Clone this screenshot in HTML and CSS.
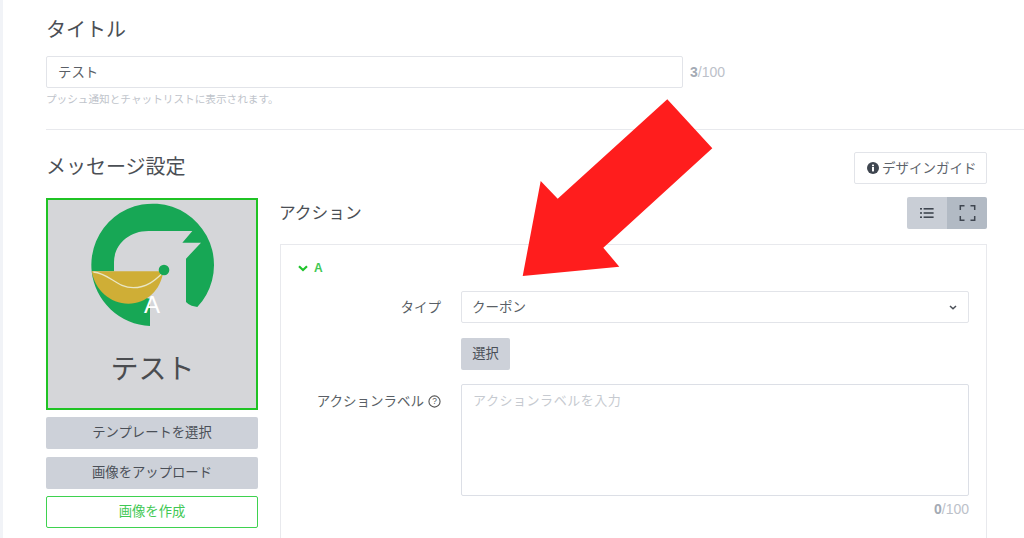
FILE: index.html
```html
<!DOCTYPE html>
<html lang="ja">
<head>
<meta charset="utf-8">
<title>メッセージ設定</title>
<link rel="stylesheet" href="styles.css">
</head>
<body>
<main class="page">
  <section class="title-section">
    <h2 class="heading">タイトル</h2>
    <div class="title-row">
      <input class="text-input" type="text" value="テスト">
      <span class="counter"><b>3</b>/100</span>
    </div>
    <p class="hint">プッシュ通知とチャットリストに表示されます。</p>
  </section>
  <hr class="divider">
  <section class="message-section">
    <div class="message-head">
      <h2 class="heading">メッセージ設定</h2>
      <button class="guide-btn" type="button">
        <svg class="info-icon" viewBox="0 0 12 12"><circle cx="6" cy="6" r="6" fill="#3f4650"/><rect x="5" y="5" width="2" height="4.4" fill="#fff"/><rect x="5" y="2.6" width="2" height="1.6" fill="#fff"/></svg>
        デザインガイド
      </button>
    </div>
    <div class="columns">
      <div class="left-col">
        <div class="preview">
          <svg class="logo" viewBox="150 35 375 375">
            <path fill="#17a755" d="M155 243A184 184 0 1 1 472 350L455 346Q444 342 438 335V205L483 157H427L457 122H325C265 122 222 165 222 215V243Z"/>
            <path fill="#17a755" d="M155 243A184 184 0 0 0 330 407V325L200 300Z"/>
            <path fill="#cfae36" d="M155 243H370C362 300 320 340 265 340C210 340 165 300 155 243Z"/>
            <path fill="none" stroke="#e9e6c4" stroke-width="4" d="M160 245C210 250 230 292 280 292C320 292 345 270 368 248"/>
            <circle cx="372" cy="239" r="16" fill="#17a755"/>
          </svg>
          <span class="preview-badge">A</span>
          <span class="preview-text">テスト</span>
        </div>
        <button class="btn btn-block" type="button">テンプレートを選択</button>
        <button class="btn btn-block" type="button">画像をアップロード</button>
        <button class="btn btn-block btn-green" type="button">画像を作成</button>
      </div>
      <div class="right-col">
        <div class="action-head">
          <h3 class="subheading">アクション</h3>
          <div class="toggle">
            <span class="toggle-item">
              <svg class="toggle-icon" viewBox="0 0 14 12"><g fill="#3f4650"><rect x="0" y="1" width="2" height="1.6"/><rect x="0" y="5.2" width="2" height="1.6"/><rect x="0" y="9.4" width="2" height="1.6"/><rect x="3.6" y="1" width="10" height="1.6"/><rect x="3.6" y="5.2" width="10" height="1.6"/><rect x="3.6" y="9.4" width="10" height="1.6"/></g></svg>
            </span>
            <span class="toggle-item toggle-active">
              <svg class="toggle-icon toggle-icon-wide" viewBox="0 0 16 16"><path fill="none" stroke="#3f4650" stroke-width="1.5" d="M.8 5V.8H5M11 .8H15.200V5M15.200 11V15.200H11M5 15.200H.8V11"/></svg>
            </span>
          </div>
        </div>
        <div class="panel">
          <div class="panel-title">
            <svg class="chevron" viewBox="0 0 10 7"><path fill="none" stroke="#1fc32c" stroke-width="2.200" d="M1 1.200L5 5L9 1.200"/></svg>
            <span>A</span>
          </div>
          <div class="form-grid">
            <label class="form-label">タイプ</label>
            <div class="select">
              <span>クーポン</span>
              <svg class="select-caret" viewBox="0 0 8 5"><path fill="none" stroke="#4a4f57" stroke-width="1.500" d="M1 1L4 3.800L7 1"/></svg>
            </div>
            <span></span>
            <div><button class="btn btn-small" type="button">選択</button></div>
            <label class="form-label form-label-top">アクションラベル
              <svg class="help-icon" viewBox="0 0 14 14"><circle cx="7" cy="7" r="6" fill="none" stroke="#555" stroke-width="1.200"/><text x="7" y="10.200" text-anchor="middle" class="help-mark">?</text></svg>
            </label>
            <div class="textarea-wrap">
              <textarea class="textarea" placeholder="アクションラベルを入力"></textarea>
              <div class="counter counter-right"><b>0</b>/100</div>
            </div>
          </div>
        </div>
      </div>
    </div>
  </section>
</main>
<svg class="arrow" viewBox="0 0 1024 538" aria-hidden="true">
  <polygon fill="#ff1d1d" points="667.300,99.300 712.300,148.300 603.300,247.700 619.300,266.700 522.700,276 540.700,181 557.700,198.700"/>
</svg>
</body>
</html>
```
FILE: styles.css
```css
* {
  box-sizing: border-box;
}

html,
body {
  margin: 0;
  height: 538px;
  overflow: hidden;
  background: #fff;
}

body {
  font-family: "Noto Sans CJK JP", "Liberation Sans", sans-serif;
  color: #4a4f57;
  position: relative;
}

.page {
  height: 538px;
  border-left: 3px solid #f1f3f7;
  padding-top: 15px;
  overflow: hidden;
}

.heading {
  margin: 0;
  font-size: 20px;
  line-height: 28px;
  font-weight: 400;
  color: #4b4f55;
}

.title-section,
.message-section {
  padding-left: 43px;
  padding-right: 37px;
}

.title-row {
  display: flex;
  align-items: center;
  gap: 7px;
  margin-top: 13px;
}

.text-input {
  width: 637px;
  height: 32px;
  border: 1px solid #e2e4e9;
  border-radius: 2px;
  padding: 0 11px 3px;
  font: inherit;
  font-size: 13.4px;
  color: #5a5f66;
  background: #fff;
}

.counter {
  font-family: "Liberation Sans", sans-serif;
  font-size: 14px;
  line-height: 14px;
  color: #bcc1c9;
}

.counter b {
  color: #a3aab4;
}

.counter-right {
  margin-top: 6px;
  text-align: right;
}

.hint {
  margin: 4px 0 0;
  font-size: 10.63px;
  line-height: 14px;
  color: #c0c4cb;
}

.divider {
  margin: 23px 0 0 43px;
  border: 0;
  border-top: 1px solid #e8e9ed;
  height: 1px;
}

.message-section {
  padding-top: 22px;
}

.message-head {
  display: flex;
  justify-content: space-between;
  align-items: flex-start;
}

.guide-btn {
  display: flex;
  align-items: center;
  gap: 3px;
  width: 133px;
  height: 32px;
  padding: 0 0 3px 12px;
  border: 1px solid #e2e4e9;
  border-radius: 2px;
  background: #fff;
  font: inherit;
  font-size: 13.5px;
  color: #5d636b;
}

.info-icon {
  width: 12px;
  height: 12px;
  flex: none;
  margin-top: 3px;
}

.columns {
  display: flex;
  gap: 22px;
  margin-top: 14px;
}

.left-col {
  width: 212px;
  flex: none;
  display: flex;
  flex-direction: column;
}

.preview {
  position: relative;
  width: 212px;
  height: 212px;
  border: 2px solid #1fc324;
  background: #d5d6d9;
  display: flex;
  flex-direction: column;
  align-items: center;
  padding-top: 2px;
}

.logo {
  width: 125px;
  height: 125px;
  flex: none;
}

.preview-badge {
  position: absolute;
  left: 96px;
  top: 91px;
  width: 16px;
  text-align: center;
  font-family: "Liberation Sans", sans-serif;
  font-size: 24px;
  line-height: 28px;
  color: #fff;
}

.preview-text {
  margin-top: 20px;
  margin-left: 1px;
  font-size: 28px;
  line-height: 40px;
  color: #4a4c50;
}

.btn {
  border: 0;
  border-radius: 2px;
  background: #cdd1d9;
  font: inherit;
  font-size: 13.34px;
  color: #4a4f57;
  padding: 0 0 3px;
}

.btn-block {
  width: 212px;
  height: 32px;
  margin-top: 8px;
  flex: none;
}

.preview + .btn-block {
  margin-top: 7px;
}

.btn-green {
  margin-top: 7px;
  background: #fff;
  border: 1px solid #3ed24f;
  color: #3fc854;
}

.right-col {
  flex: 1;
  min-width: 0;
  margin-top: -1px;
}

.action-head {
  display: flex;
  justify-content: space-between;
  align-items: flex-start;
}

.subheading {
  margin: 1px 0 0 -1px;
  font-size: 16.7px;
  line-height: 28px;
  font-weight: 400;
  color: #4b4f55;
}

.toggle {
  display: flex;
  height: 32px;
  border-radius: 2px;
  overflow: hidden;
}

.toggle-item {
  width: 40px;
  background: #c9ced6;
  display: flex;
  align-items: center;
  justify-content: center;
}

.toggle-active {
  background: #b2bac4;
}

.toggle-icon {
  width: 14px;
  height: 12px;
}

.toggle-icon-wide {
  width: 17px;
  height: 16px;
}

.panel {
  margin-top: 15px;
  height: 320px;
  border: 1px solid #e8e9ed;
  padding: 16px 17px 0;
}

.panel-title {
  display: flex;
  align-items: center;
  gap: 6px;
  height: 14px;
  font-family: "Liberation Sans", sans-serif;
  font-size: 12px;
  font-weight: 700;
  color: #3fc854;
}

.chevron {
  width: 10px;
  height: 7px;
}

.form-grid {
  display: grid;
  grid-template-columns: 143px 508px;
  column-gap: 20px;
  row-gap: 15px;
  margin-top: 16px;
}

.form-label {
  display: flex;
  align-items: center;
  justify-content: flex-end;
  gap: 4px;
  font-size: 13.5px;
  color: #5a5f66;
  padding-bottom: 2px;
}

.form-label-top {
  align-self: start;
  height: 32px;
}

.help-icon {
  width: 13px;
  height: 13px;
  flex: none;
  margin-top: 2px;
}

.help-mark {
  font-family: "Liberation Sans", sans-serif;
  font-size: 9px;
  fill: #555;
}

.select {
  height: 32px;
  border: 1px solid #e2e4e9;
  border-radius: 2px;
  padding: 0 11px 2px 10px;
  display: flex;
  align-items: center;
  justify-content: space-between;
  font-size: 13.5px;
  color: #5a5f66;
}

.select-caret {
  width: 8px;
  height: 5px;
  margin-top: 2px;
}

.btn-small {
  display: block;
  width: 49px;
  height: 32px;
}

.textarea-wrap {
  margin-top: -1px;
}

.textarea {
  display: block;
  width: 508px;
  height: 112px;
  border: 1px solid #dcdfe6;
  border-radius: 2px;
  padding: 5px 11px;
  margin: 0;
  resize: none;
  font: inherit;
  font-size: 13px;
  letter-spacing: 0.55px;
  background: #fff;
}

.textarea::placeholder {
  color: #c6cad0;
  opacity: 1;
}

.arrow {
  position: absolute;
  left: 0;
  top: 0;
  width: 1024px;
  height: 538px;
  pointer-events: none;
}
```
